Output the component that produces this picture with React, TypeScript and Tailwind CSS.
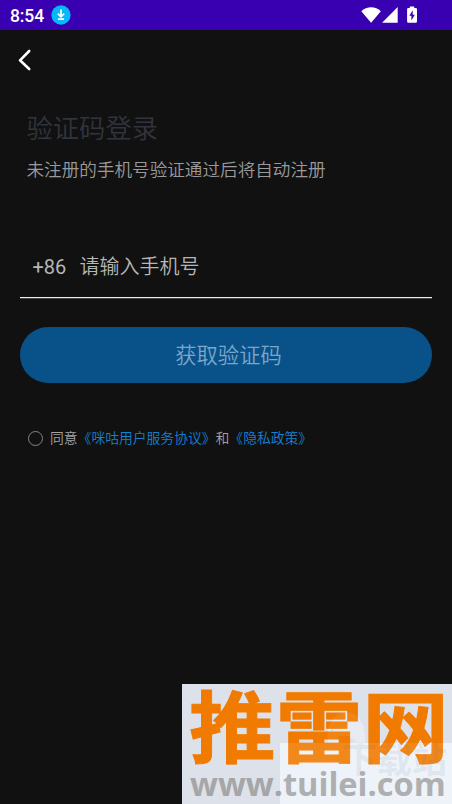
import React from "react";

const cjk = "font-[Roboto,'Noto_Sans_CJK_SC',sans-serif]";

function StatusBar() {
  return (
    <header className="flex h-[30px] items-center bg-[#3900b1] pl-[10px] text-white">
      <span className="w-[41px] pt-px text-[17.5px] leading-[30px] font-medium tracking-[-0.1px] whitespace-nowrap">8:54</span>
      <svg className="h-5 w-5" viewBox="0 0 20 20">
        <circle cx="10" cy="10" r="9.7" fill="#06b7fb" />
        <path d="M10 4.5v7M6.8 8.6l3.2 3.2 3.2-3.2M6.9 14.2h6.2" fill="none" stroke="white" strokeWidth="1.7" />
      </svg>
      <svg className="ml-[289px] h-[18px] w-[60px]" viewBox="360 6 60 18" fill="white">
        <path d="M361.3 11.2c5.2-5.2 14.4-5.2 19.6 0L371.1 22.7z" />
        <path d="M397.7 7v15.8h-15.6z" />
        <path d="M409.8 6.4h4.4v1.6h1.5q1.3 0 1.3 1.3v12.2q0 1.300-1.300 1.300h-7.300q-1.300 0-1.300-1.300V9.300q0-1.300 1.300-1.300h1.400z" />
        <path d="M412.700 10.300l-3.400 5.400h2.100v4.700l3.400-5.600h-2.100z" fill="#3900b1" />
      </svg>
    </header>
  );
}

function Watermark() {
  return (
    <div className="absolute top-[684px] left-[182px] h-[120px] w-[270px] overflow-hidden bg-[#dde1e9]">
      <div className="absolute top-[59px] left-[98px] h-[61px] w-[172px] bg-[#edf2f9]" />
      <svg className="absolute top-[26px] left-[140px] h-[45px] w-[60px]" viewBox="0 0 60 45">
        <path d="M6 34C4 17 11 3 24 3s20 12 19 29c-3 7-9 4-12-3H18c-2 6-8 12-12 5z" fill="#e6eaf0" />
        <path d="M10 13v8M6 17h8" stroke="#d4d8df" strokeWidth="2" />
        <path d="M57 20l-6 9h6l-5 8" fill="none" stroke="#e7ebf0" strokeWidth="2" />
      </svg>
      <div className="absolute top-[4.500px] left-[7px] flex origin-top-left scale-x-[.99] scale-y-[.9] text-[87.500px] leading-[93px] font-bold whitespace-nowrap text-[#f17a00] [-webkit-text-stroke:1px_#f17a00]">
        推雷网
      </div>
      <div className="absolute top-[81px] left-[8px] origin-left scale-x-[.987] text-[33px] leading-[38px] font-bold whitespace-nowrap text-[#a5a6a7] font-['Open_Sans',sans-serif]">
        www.tuilei.com
      </div>
      <svg className="absolute top-[28px] left-[98px] h-[92px] w-[172px]" viewBox="0 0 172 92">
        <path d="M0 31h172v61H0z" fill="white" opacity=".1" />
        <path d="M48 27C46 16 53 0 66 0s20 12 19 27c-3 5-9 3-11-3H59c-2 6-8 7-11 3z" fill="white" opacity=".08" />
      </svg>
      <div className="absolute top-[58px] left-[160px] text-[35px] leading-[40px] font-bold whitespace-nowrap text-[#607080]/10">
        下载站
      </div>
    </div>
  );
}

export default function App() {
  return (
    <div className={`relative h-[804px] w-[452px] overflow-hidden bg-[#111111] ${cjk}`}>
      <StatusBar />
      <nav className="flex h-[60px] items-center pl-[18px]">
        <button type="button" aria-label="返回" className="block">
          <svg className="h-[24px] w-[14px]" viewBox="0 0 14 24" fill="none" stroke="white" strokeWidth="2.6" strokeLinecap="round" strokeLinejoin="round">
            <path d="M11.200 3L2 12.300l9.200 8.700" />
          </svg>
        </button>
      </nav>
      <main className="px-5 font-[350]">
        <h1 className="pt-[20px] pl-[6.500px] text-[26.300px] leading-[38px] font-[350] text-[#31343d]">验证码登录</h1>
        <p className="mt-[9px] pl-[6.500px] text-[17.600px] leading-[26px] whitespace-nowrap text-[#9a9a9c]">未注册的手机号验证通过后将自动注册</p>
        <div className="mt-[63px] flex h-[52px] border-b border-[#eeeeee] pt-px text-[20px] leading-[40px] text-[#b6b6b6] shadow-[0_1px_0_#444444]">
          <span className="w-[47px] pl-[12.500px] font-normal">+86</span>
          <span className="pl-[12.500px]">请输入手机号</span>
        </div>
        <button type="button" className="mt-[29px] block h-[56px] w-full rounded-full bg-[#095189] pt-px pl-[5px] text-[21.300px] leading-[55px] text-[#7ba6c8]">
          获取验证码
        </button>
        <label className="mt-[45px] flex h-5 items-center pl-[7.500px] text-[13.800px] leading-5 whitespace-nowrap text-[#a3a3a3]">
          <span className="mr-[7.500px] h-[15px] w-[15px] rounded-full border border-[#858585]" />
          <span>同意<span className="text-[#1580d0]">《咪咕用户服务协议》</span>和<span className="text-[#1580d0]">《隐私政策》</span></span>
        </label>
      </main>
      <Watermark />
    </div>
  );
}
